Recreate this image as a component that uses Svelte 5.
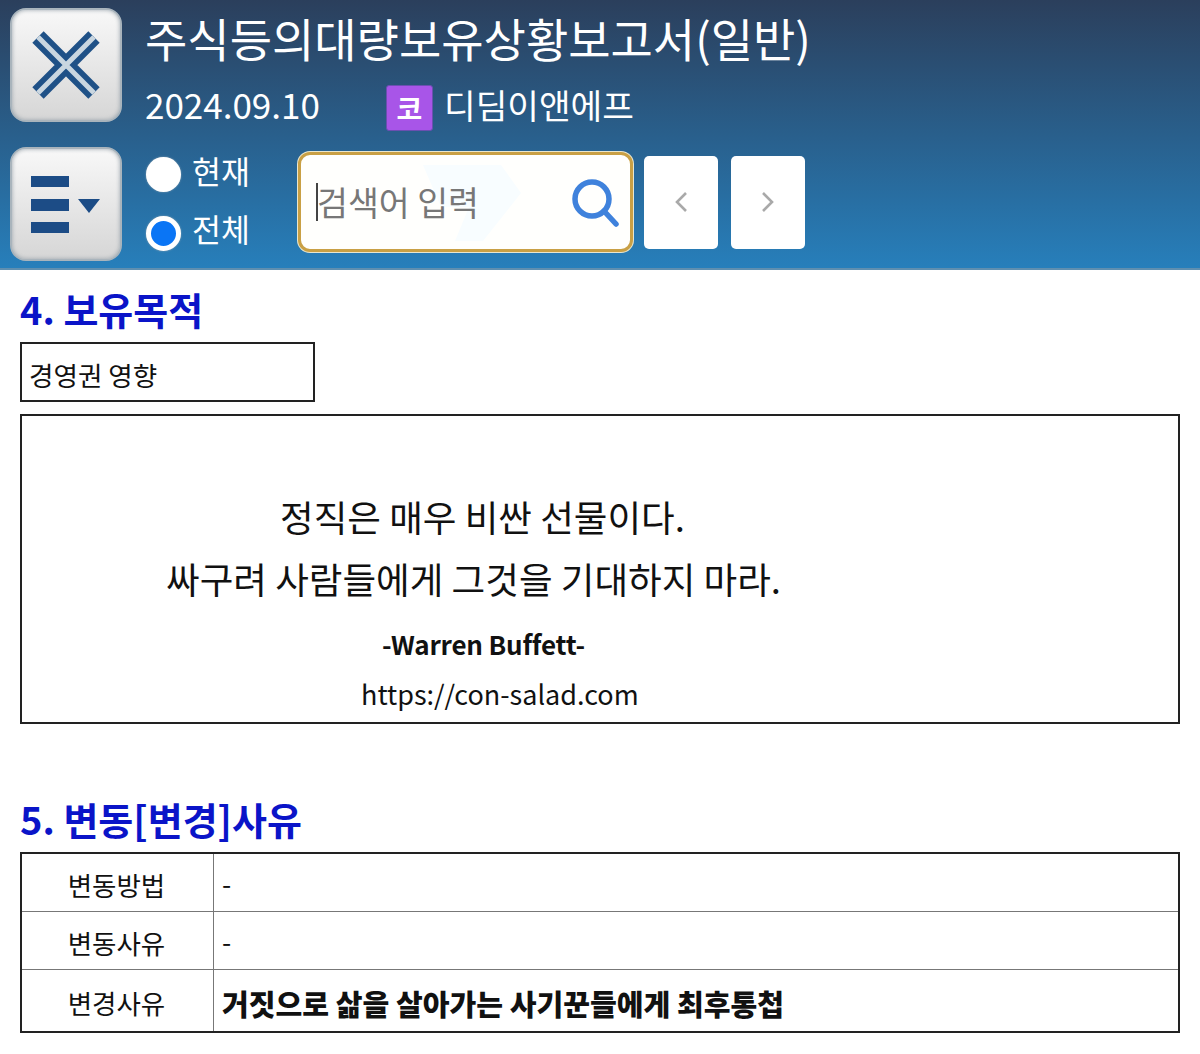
<script>
    const rows = [
        {label: "변동방법", value: "-"},
        {label: "변동사유", value: "-"},
        {label: "변경사유", value: "거짓으로 삶을 살아가는 사기꾼들에게 최후통첩", strong: true}
    ];
</script>

<div class="page">
    <header class="top">
        <div class="icons">
            <button class="tile" aria-label="닫기">
                <svg width="76" height="76" viewBox="0 0 76 76">
                    <path d="M10 10 66 66M66 10 10 66" stroke="#1f5187" stroke-width="16" fill="none"/>
                    <path d="M10 10 66 66M66 10 10 66" stroke="#c9d6e0" stroke-width="5" fill="none"/>
                </svg>
            </button>
            <button class="tile" aria-label="메뉴">
                <svg width="76" height="60" viewBox="0 0 76 60">
                    <rect x="3" y="2" width="38" height="11" fill="#1c4c86"/>
                    <rect x="3" y="25" width="38" height="12" fill="#1c4c86"/>
                    <rect x="3" y="48" width="38" height="11" fill="#1c4c86"/>
                    <path d="M50 25H72L61 39Z" fill="#1c4c86"/>
                </svg>
            </button>
        </div>
        <div class="main">
            <h1>주식등의대량보유상황보고서(일반)</h1>
            <div class="meta">
                <span class="date">2024.09.10</span>
                <span class="badge">코</span>
                <span class="company">디딤이앤에프</span>
            </div>
            <div class="tools">
                <div class="radios">
                    <div class="radio"><span class="dot"></span><span class="name">현재</span></div>
                    <div class="radio"><span class="dot on"></span><span class="name">전체</span></div>
                </div>
                <div class="search">
                    <svg class="mark" width="110" height="76" viewBox="0 0 110 76">
                        <path d="M12 0H90L110 28 72 76H44L58 42H30Z" fill="#f8fdff"/>
                    </svg>
                    <span class="caret"></span>
                    <span class="hint">검색어 입력</span>
                    <svg class="glass" width="50" height="50" viewBox="0 0 50 50">
                        <circle cx="21" cy="21" r="17" stroke="#3f82dc" stroke-width="5.5" fill="none"/>
                        <path d="M33 33 45 46" stroke="#3f82dc" stroke-width="5.5" stroke-linecap="round"/>
                    </svg>
                </div>
                <button class="nav" aria-label="이전">
                    <svg width="14" height="22" viewBox="0 0 14 22"><path d="M12 2 3 11l9 9" stroke="#a9a9a9" stroke-width="2.6" fill="none"/></svg>
                </button>
                <button class="nav" aria-label="다음">
                    <svg width="14" height="22" viewBox="0 0 14 22"><path d="M2 2l9 9-9 9" stroke="#a9a9a9" stroke-width="2.6" fill="none"/></svg>
                </button>
            </div>
        </div>
    </header>

    <section class="content">
        <h2>4. 보유목적</h2>
        <div class="purpose">경영권 영향</div>

        <div class="ad">
            <p class="l1">정직은 매우 비싼 선물이다.</p>
            <p class="l2">싸구려 사람들에게 그것을 기대하지 마라.</p>
            <p class="l3">-Warren Buffett-</p>
            <p class="l4">https://con-salad.com</p>
        </div>

        <h2 class="second">5. 변동[변경]사유</h2>
        <div class="table">
            {#each rows as row}
                <div class="row">
                    <div class="label">{row.label}</div>
                    <div class="value" class:strong={row.strong}>{row.value}</div>
                </div>
            {/each}
        </div>
    </section>
</div>

<style>
    :global(body) {
        margin: 0;
        background: #fff;
    }

    .page {
        width: 1200px;
        height: 1054px;
        overflow: hidden;
        font-family: "Noto Sans CJK KR", "Noto Sans", sans-serif;
        color: #111;
    }

    .top {
        display: flex;
        height: 260px;
        padding: 8px 0 0 10px;
        gap: 23px;
        background: linear-gradient(#2b3f5c, #277fbb);
        border-bottom: 2px solid #5f8fb0;
        color: #fff;
    }

    .icons {
        display: flex;
        flex-direction: column;
        gap: 25px;
    }

    .tile {
        width: 112px;
        height: 114px;
        padding: 0;
        display: flex;
        align-items: center;
        justify-content: center;
        border: 2px solid #a9b4bc;
        border-radius: 16px;
        box-sizing: border-box;
        background: linear-gradient(#f8f8f8, #d6d6d6);
        box-shadow: inset 0 0 4px #9aa4ac;
    }

    .main {
        display: flex;
        flex-direction: column;
    }

    h1 {
        margin: -2px 0 0;
        font-size: 46px;
        font-weight: 400;
        line-height: 62px;
    }

    .meta {
        display: flex;
        align-items: center;
        height: 48px;
        margin-top: 12px;
    }

    .date {
        width: 241px;
        font-size: 35px;
        line-height: 48px;
    }

    .badge {
        width: 47px;
        height: 46px;
        margin-top: 8px;
        margin-right: 11px;
        display: flex;
        align-items: center;
        justify-content: center;
        border-radius: 3px;
        background: #a855e8;
        border: 1px solid #6b4fb0;
        box-sizing: border-box;
        font-size: 28px;
        font-weight: 700;
    }

    .company {
        font-size: 34.4px;
        line-height: 48px;
    }

    .tools {
        display: flex;
        align-items: center;
        margin-top: 21px;
        padding-left: 1px;
    }

    .radios {
        display: flex;
        flex-direction: column;
        gap: 10px;
        width: 152px;
    }

    .radio {
        display: flex;
        align-items: center;
        gap: 11px;
        height: 48px;
        font-size: 31.5px;
    }

    .name {
        margin-top: -6px;
    }

    .dot {
        width: 35px;
        height: 35px;
        margin-top: 2px;
        border-radius: 50%;
        background: #fff;
        box-sizing: border-box;
        box-shadow: 0 0 2px #8fa4b4;
    }

    .dot.on {
        margin-top: 4px;
        background: #0a75f5;
        border: 5px solid #fff;
    }

    .search {
        position: relative;
        display: flex;
        align-items: center;
        width: 335px;
        height: 100px;
        box-sizing: border-box;
        padding-left: 15px;
        border: 3px solid #c9a045;
        border-radius: 12px;
        background: #fffffd;
        margin-right: 11px;
        box-shadow: 0 0 0 1px #e9e6cf;
    }

    .mark {
        position: absolute;
        left: 110px;
        top: 10px;
    }

    .caret {
        position: relative;
        width: 2px;
        height: 38px;
        margin-right: -1px;
        background: #444;
    }

    .hint {
        position: relative;
        top: -1px;
        font-size: 33.6px;
        color: #777;
    }

    .glass {
        position: absolute;
        right: 9px;
        top: 23px;
    }

    .nav {
        width: 74px;
        height: 93px;
        margin-right: 13px;
        padding: 0;
        display: flex;
        align-items: center;
        justify-content: center;
        border: 0;
        border-radius: 5px;
        background: #fff;
    }

    .content {
        padding: 0 20px;
    }

    h2 {
        margin: 0;
        padding-top: 10px;
        padding-bottom: 4px;
        font-size: 38px;
        line-height: 58px;
        font-weight: 700;
        color: #0a14c8;
    }

    h2.second {
        margin-top: 66px;
        padding-top: 0;
    }

    .purpose {
        width: 295px;
        height: 60px;
        box-sizing: border-box;
        padding: 5px 0 0 7px;
        display: flex;
        align-items: center;
        border: 2px solid #222;
        font-size: 26.6px;
    }

    .ad {
        height: 310px;
        box-sizing: border-box;
        margin-top: 12px;
        padding-top: 70px;
        border: 2px solid #222;
    }

    .ad p {
        margin: 0;
    }

    .l1, .l2 {
        font-size: 36.6px;
        line-height: 61.5px;
    }

    .l1 {
        padding-left: 258px;
    }

    .l2 {
        padding-left: 144px;
    }

    .l3 {
        padding: 10px 0 0 360px;
        font-size: 26px;
        font-weight: 600;
        letter-spacing: -0.2px;
        line-height: 50px;
    }

    .l4 {
        padding-left: 339px;
        font-size: 27px;
        line-height: 50px;
    }

    .table {
        border: 2px solid #222;
    }

    .row {
        display: grid;
        grid-template-columns: 192px 1fr;
        height: 57px;
        border-bottom: 1px solid #777;
        font-size: 26.5px;
    }

    .row:last-child {
        border-bottom: 0;
        height: 61px;
    }

    .label {
        display: flex;
        align-items: center;
        justify-content: center;
        padding: 4px 2px 0 0;
        border-right: 1px solid #777;
    }

    .value {
        display: flex;
        align-items: center;
        padding-left: 8px;
    }

    .strong {
        padding-top: 4px;
        font-weight: 900;
        font-size: 29.1px;
    }
</style>
